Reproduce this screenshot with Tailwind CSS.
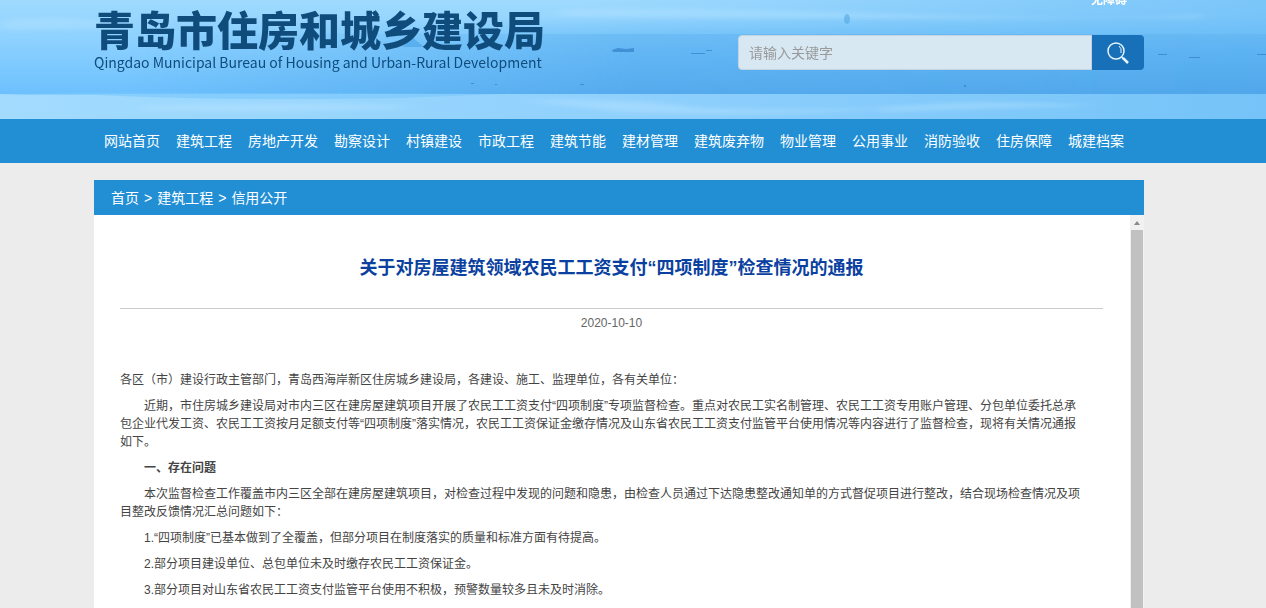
<!DOCTYPE html>
<html lang="zh-CN">
<head>
    <meta charset="UTF-8">
    <meta name="viewport" content="width=device-width, initial-scale=1.0">
    <title>青岛市住房和城乡建设局</title>
    <script src="https://cdn.jsdelivr.net/npm/@tailwindcss/browser@4"></script>
</head>
<body class="bg-[#ececec] h-screen overflow-hidden flex flex-col font-['Liberation_Sans','Noto_Sans_CJK_SC',sans-serif]">

    <header class="relative shrink-0 h-[119px] pr-7 overflow-hidden">
        <!-- Sea and sky banner -->
        <svg class="absolute inset-0 w-full h-full" viewBox="0 0 1266 119" preserveAspectRatio="none" aria-hidden="true">
            <defs>
                <linearGradient id="sky" x1="0" y1="0" x2="0" y2="1">
                    <stop offset="0" stop-color="#a0dafe"/>
                    <stop offset="0.4" stop-color="#8ed2ff"/>
                    <stop offset="1" stop-color="#6cc0fd"/>
                </linearGradient>
                <linearGradient id="haze" x1="0" y1="0" x2="0" y2="1">
                    <stop offset="0" stop-color="#6bbdf6" stop-opacity="0"/>
                    <stop offset="1" stop-color="#6bbdf6" stop-opacity="0.7"/>
                </linearGradient>
                <linearGradient id="sea" x1="0" y1="0" x2="0" y2="1">
                    <stop offset="0" stop-color="#66b8f3"/>
                    <stop offset="0.3" stop-color="#5cb2f2"/>
                    <stop offset="1" stop-color="#50a6ea"/>
                </linearGradient>
                <linearGradient id="fade" x1="0" y1="0" x2="1" y2="0">
                    <stop offset="0.1" stop-color="#fff" stop-opacity="0"/>
                    <stop offset="0.5" stop-color="#fff" stop-opacity="0.85"/>
                    <stop offset="1" stop-color="#fff"/>
                </linearGradient>
                <linearGradient id="shore" x1="0" y1="0" x2="1" y2="0">
                    <stop offset="0" stop-color="#a2dbfe"/>
                    <stop offset="0.5" stop-color="#8fd0fd"/>
                    <stop offset="1" stop-color="#75c3f8"/>
                </linearGradient>
                <linearGradient id="dim" x1="0" y1="0" x2="1" y2="0">
                    <stop offset="0.45" stop-color="#5db5f5" stop-opacity="0"/>
                    <stop offset="1" stop-color="#5db5f5" stop-opacity="0.55"/>
                </linearGradient>
                <filter id="soft" x="-10%" y="-60%" width="120%" height="220%"><feGaussianBlur stdDeviation="8 2"/></filter>
                <mask id="right"><rect width="1266" height="119" fill="url(#fade)"/></mask>
            </defs>
            <rect width="1266" height="95" fill="url(#sky)"/>
            <rect width="1266" height="34" fill="url(#dim)"/>
            <rect y="17" width="1266" height="17" fill="url(#haze)" mask="url(#right)"/>
            <g fill="#b4e3ff" filter="url(#soft)">
                <path d="M0 20 Q60 14 110 22 T0 30 Z" opacity="0.4"/>
                <path d="M560 10 Q680 6 900 14 T1200 14 L1200 18 Q900 20 560 16 Z" opacity="0.4"/>
            </g>
            <rect y="34" width="1266" height="61" fill="url(#sea)" mask="url(#right)"/>
            <path d="M402 47 L412 37 L424 47 Z" fill="#4ea6ea" opacity="0.7"/>
            <rect y="94" width="1266" height="25" fill="url(#shore)"/>
            <path d="M0 95 L100 95 Q220 101 400 98 L500 94 L80 92 Z" fill="#76c6fc" opacity="0.6"/>
            <g fill="#bce6ff" filter="url(#soft)" opacity="0.4">
                <path d="M140 106 Q300 100 420 107 Q300 114 140 110 Z"/>
                <path d="M520 100 Q640 98 700 108 Q820 112 900 106 Q800 118 620 112 Z"/>
                <path d="M880 108 Q980 98 1100 106 Q980 108 880 112 Z"/>
            </g>
            <g fill="#3683ca" opacity="0.75">
                <path d="M612 50 L618 48 L626 49 L634 48 L634 52 L613 52 Z"/>
                <path d="M691 53 H705 V54 H691 Z"/>
                <path d="M706 50 H712 V51 H706 Z"/>
                <path d="M1158 54 H1167 V55 H1158 Z"/>
                <path d="M1189 57 H1200 V58 H1189 Z"/>
                <path d="M1257 54 H1266 V55 H1257 Z"/>
                <path d="M471 83 H474 V84 H471 Z"/>
                <path d="M495 84 H497 V85 H495 Z"/>
                <path d="M580 84 H584 V85 H580 Z"/>
                <path d="M964 85 H966 V87 H964 Z"/>
            </g>
            <ellipse cx="847" cy="19" rx="3" ry="5" fill="#4a9fdd" opacity="0.5"/>
        </svg>

        <div class="relative max-w-[1050px] mx-auto flex justify-between">
            <a href="#" class="block whitespace-nowrap text-[#0f4c7c]">
                <h1 class="pt-2.5 text-[41px] leading-[44px] font-black">青岛市住房和城乡建设局</h1>
                <p class="text-sm leading-4 font-['Noto_Sans_CJK_SC',sans-serif]">Qingdao Municipal Bureau of Housing and Urban-Rural Development</p>
            </a>
            <form class="flex mt-[35px] h-[35px] w-[406px]">
                <input type="text" id="keyword" aria-label="请输入关键字" placeholder="请输入关键字" class="flex-1 min-w-0 px-2.5 text-sm bg-[#d8e8f3] border border-[#c3d3df] rounded-l-sm placeholder:text-[#999] focus:outline-none">
                <button type="submit" aria-label="搜索" class="w-[52px] bg-[#1870b8] rounded-r-sm flex items-center justify-center">
                    <svg class="w-6 h-6" viewBox="0 0 24 24" fill="none" stroke="#e6f5ff">
                        <circle cx="10" cy="10" r="8" stroke-width="1.5"/>
                        <path d="M13 5 Q16 7 15 12" stroke-width="1"/>
                        <path d="M15.500 16 L17.500 18" stroke-width="1.500"/>
                        <path d="M17 17 L22 22" stroke-width="2.500"/>
                    </svg>
                </button>
            </form>
            <a href="#" class="absolute -top-2 right-[17px] text-xs font-bold text-white">无障碍</a>
        </div>
    </header>

    <nav class="shrink-0 bg-[#228fd5] pr-7">
        <div class="max-w-[1050px] mx-auto h-11 px-2.5 flex items-center gap-4 text-sm text-white whitespace-nowrap">
            <a href="#">网站首页</a>
            <a href="#">建筑工程</a>
            <a href="#">房地产开发</a>
            <a href="#">勘察设计</a>
            <a href="#">村镇建设</a>
            <a href="#">市政工程</a>
            <a href="#">建筑节能</a>
            <a href="#">建材管理</a>
            <a href="#">建筑废弃物</a>
            <a href="#">物业管理</a>
            <a href="#">公用事业</a>
            <a href="#">消防验收</a>
            <a href="#">住房保障</a>
            <a href="#">城建档案</a>
        </div>
    </nav>

    <main class="flex-1 min-h-0 pt-[17px] pr-7">
        <div class="max-w-[1050px] h-full mx-auto flex flex-col bg-white">
            <div class="shrink-0 h-[35px] px-[17px] flex items-center gap-[5px] bg-[#228fd5] text-sm text-white">
                <a href="#">首页</a>
                <span>&gt;</span>
                <a href="#">建筑工程</a>
                <span>&gt;</span>
                <a href="#">信用公开</a>
            </div>

            <div class="flex-1 min-h-0 flex overflow-hidden">
                <article class="flex-1 pl-[26px] pr-[27px] pt-[38px] text-[#444]">
                    <h2 class="pb-[25px] text-lg leading-[30px] font-bold text-center text-[#0a41a0]">关于对房屋建筑领域农民工工资支付“四项制度”检查情况的通报</h2>
                    <div class="border-t border-[#ccc] text-xs leading-7 text-center text-[#666]">2020-10-10</div>
                    <div class="pt-[34px] pr-[18px] flex flex-col gap-2 text-xs leading-[18px]">
                        <p>各区（市）建设行政主管部门，青岛西海岸新区住房城乡建设局，各建设、施工、监理单位，各有关单位：</p>
                        <p class="indent-6">近期，市住房城乡建设局对市内三区在建房屋建筑项目开展了农民工工资支付“四项制度”专项监督检查。重点对农民工实名制管理、农民工工资专用账户管理、分包单位委托总承包企业代发工资、农民工工资按月足额支付等“四项制度”落实情况，农民工工资保证金缴存情况及山东省农民工工资支付监管平台使用情况等内容进行了监督检查，现将有关情况通报如下。</p>
                        <p class="indent-6 font-bold">一、存在问题</p>
                        <p class="indent-6">本次监督检查工作覆盖市内三区全部在建房屋建筑项目，对检查过程中发现的问题和隐患，由检查人员通过下达隐患整改通知单的方式督促项目进行整改，结合现场检查情况及项目整改反馈情况汇总问题如下：</p>
                        <p class="indent-6">1.“四项制度”已基本做到了全覆盖，但部分项目在制度落实的质量和标准方面有待提高。</p>
                        <p class="indent-6">2.部分项目建设单位、总包单位未及时缴存农民工工资保证金。</p>
                        <p class="indent-6">3.部分项目对山东省农民工工资支付监管平台使用不积极，预警数量较多且未及时消除。</p>
                    </div>
                </article>

                <!-- Scroll track -->
                <div class="w-3.5 shrink-0 flex flex-col items-center bg-[#f1f1f1]" aria-hidden="true">
                    <svg class="w-3.5 h-[15px] shrink-0" viewBox="0 0 14 15"><path d="M4 10 L7 6 L10 10 Z" fill="#8a8a8a"/></svg>
                    <div class="w-3 flex-1 bg-[#c1c1c1]"></div>
                </div>
            </div>
        </div>
    </main>

</body>
</html>
